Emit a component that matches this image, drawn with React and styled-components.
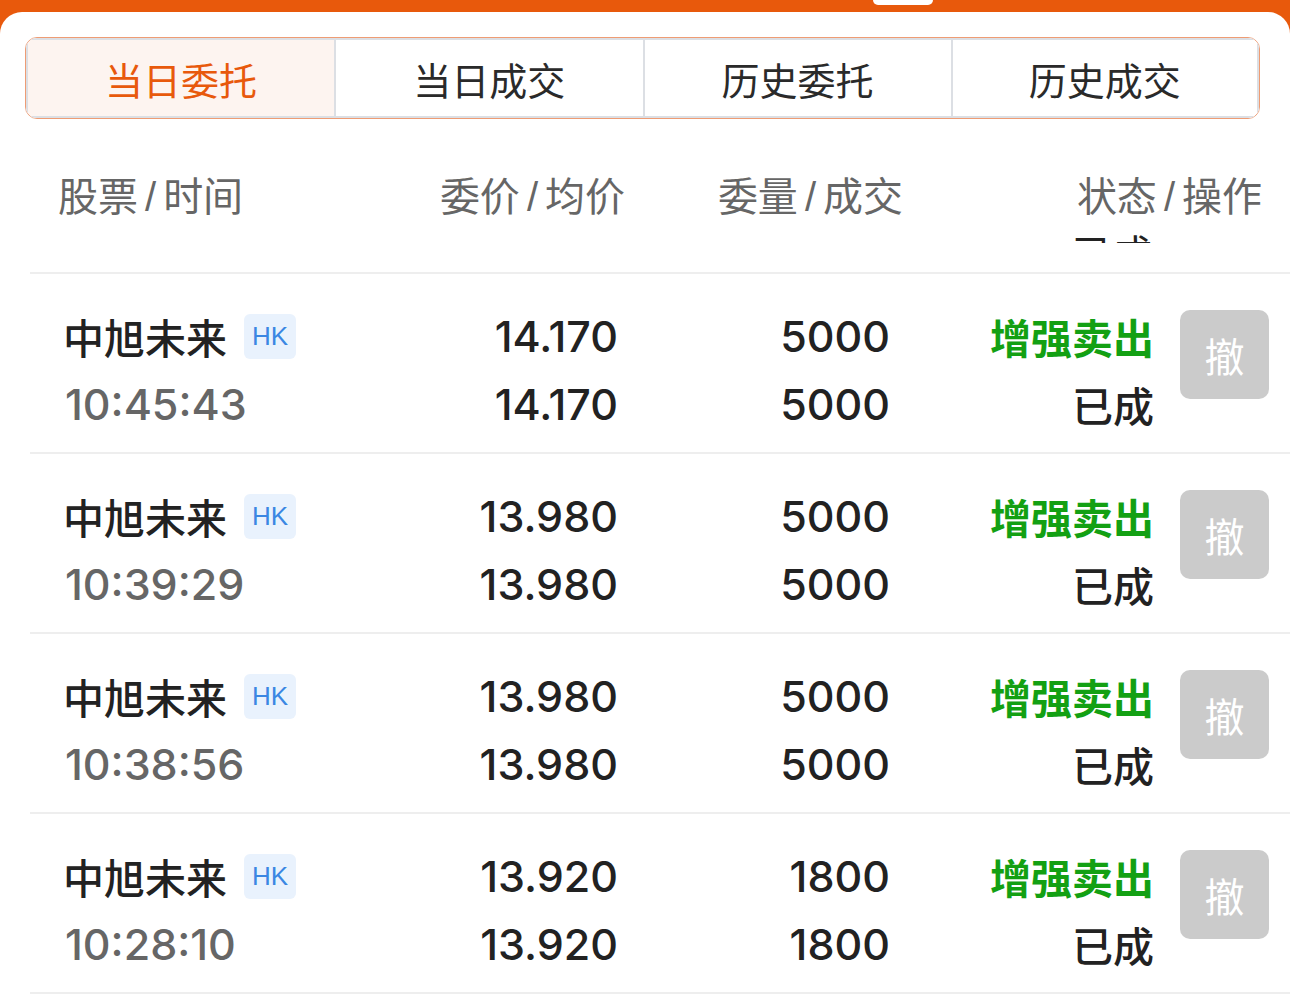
import styled, { createGlobalStyle } from 'styled-components'

const GlobalStyle = createGlobalStyle`
  html, body {
    margin: 0;
    padding: 0;
    background: #ffffff;
  }
  body {
    font-family: "Liberation Sans", "Noto Sans CJK SC", sans-serif;
    -webkit-font-smoothing: antialiased;
  }
`

const tabs = ['当日委托', '当日成交', '历史委托', '历史成交']

const orders = [
  { name: '中旭未来', time: '10:45:43', price: '14.170', avg: '14.170', qty: '5000', done: '5000' },
  { name: '中旭未来', time: '10:39:29', price: '13.980', avg: '13.980', qty: '5000', done: '5000' },
  { name: '中旭未来', time: '10:38:56', price: '13.980', avg: '13.980', qty: '5000', done: '5000' },
  { name: '中旭未来', time: '10:28:10', price: '13.920', avg: '13.920', qty: '1800', done: '1800' },
]

function App() {
  return (
    <Page>
      <GlobalStyle />
      <Pill />
      <Sheet>
        <TabBar>
          {tabs.map((t, i) => (
            <Tab key={t} $active={i === 0}>{t}</Tab>
          ))}
        </TabBar>

        <HeaderRow>
          <HeadCell>股票<Slash>/</Slash>时间</HeadCell>
          <HeadCell $right>委价<Slash>/</Slash>均价</HeadCell>
          <HeadCell $right>委量<Slash>/</Slash>成交</HeadCell>
          <HeadCell $right>
            状态<Slash>/</Slash>操作
            <ClipLine>已成</ClipLine>
          </HeadCell>
        </HeaderRow>

        {orders.map((o, i) => (
          <OrderRow key={i}>
            <NameLine>
              {o.name}
              <Market>HK</Market>
            </NameLine>
            <Num>{o.price}</Num>
            <Num>{o.qty}</Num>
            <Status>增强卖出</Status>
            <CancelBtn>撤</CancelBtn>
            <Time>{o.time}</Time>
            <Num>{o.avg}</Num>
            <Num>{o.done}</Num>
            <State>已成</State>
          </OrderRow>
        ))}
      </Sheet>
    </Page>
  )
}

export default App

const Page = styled.div`
  position: relative;
  background: #e8590c;
  padding-top: 12px;
  min-height: 100vh;
  box-sizing: border-box;
`

const Pill = styled.div`
  position: absolute;
  top: 0;
  left: 873px;
  width: 60px;
  height: 5px;
  background: #ffffff;
  border-radius: 0 0 5px 5px;
`

const Sheet = styled.div`
  background: #ffffff;
  border-radius: 22px 22px 0 0;
  padding-top: 25px;
  min-height: 991px;
  box-sizing: border-box;
`

const TabBar = styled.div`
  display: grid;
  grid-template-columns: repeat(4, 1fr);
  margin: 0 30px 0 25px;
  height: 82px;
  border: 1px solid #ee9c74;
  border-radius: 12px;
  overflow: hidden;
  box-sizing: border-box;
`

const Tab = styled.div`
  display: flex;
  align-items: center;
  justify-content: center;
  font-size: 38px;
  color: ${(p) => (p.$active ? '#e8590c' : '#2a2a2a')};
  background: ${(p) => (p.$active ? '#fdf4f0' : '#ffffff')};
  border-top: 2px solid #dcdfe4;
  border-bottom: 2px solid #dcdfe4;
  border-left: 2px solid #dcdfe4;
  &:last-child {
    border-right: 2px solid #dcdfe4;
  }
`

const HeaderRow = styled.div`
  display: grid;
  grid-template-columns: 342px 225px 278px 359px;
  align-items: start;
  margin-left: 30px;
  padding: 50px 0 0 28px;
  height: 155px;
  box-sizing: border-box;
  border-bottom: 2px solid #eeeeee;
`

const HeadCell = styled.div`
  display: flex;
  flex-wrap: wrap;
  justify-content: ${(p) => (p.$right ? 'flex-end' : 'flex-start')};
  font-size: 40px;
  line-height: 56px;
  color: #666666;
`

const Slash = styled.span`
  margin: 0 7px;
`

const ClipLine = styled.div`
  flex-basis: 100%;
  text-align: right;
  padding-right: 110px;
  height: 8px;
  margin-top: 10px;
  overflow: hidden;
  font-size: 40px;
  line-height: 40px;
  color: #222222;
  box-sizing: border-box;
`

const OrderRow = styled.div`
  display: grid;
  grid-template-columns: 335px 216px 272px 264px 117px;
  grid-auto-rows: 68px;
  align-items: center;
  margin-left: 30px;
  padding: 28px 21px 0 35px;
  height: 180px;
  box-sizing: border-box;
  border-bottom: 2px solid #eeeeee;
`

const NameLine = styled.div`
  display: flex;
  align-items: center;
  font-size: 41px;
  font-weight: 500;
  color: #222222;
  margin-left: -2px;
`

const Market = styled.span`
  display: inline-flex;
  align-items: center;
  justify-content: center;
  margin-left: 17px;
  width: 52px;
  height: 45px;
  border-radius: 6px;
  background: #e9f2fd;
  color: #3b87e3;
  font-size: 26px;
  font-weight: 400;
`

const Num = styled.div`
  text-align: right;
  font-family: "Inter", "Liberation Sans", sans-serif;
  font-size: 43px;
  font-weight: 500;
  color: #222222;
  margin-right: -2px;
`

const Time = styled.div`
  font-family: "Inter", "Liberation Sans", sans-serif;
  font-size: 43px;
  font-weight: 500;
  color: #666666;
`

const Status = styled.div`
  text-align: right;
  font-size: 41px;
  font-weight: 600;
  color: #13a013;
  margin-right: -2px;
`

const State = styled.div`
  text-align: right;
  font-size: 41px;
  font-weight: 500;
  color: #222222;
  margin-right: -2px;
`

const CancelBtn = styled.div`
  grid-row: span 2;
  align-self: start;
  justify-self: end;
  margin-top: 8px;
  display: flex;
  align-items: center;
  justify-content: center;
  width: 89px;
  height: 89px;
  border-radius: 10px;
  background: #cbcbcb;
  color: #ffffff;
  font-size: 40px;
`
